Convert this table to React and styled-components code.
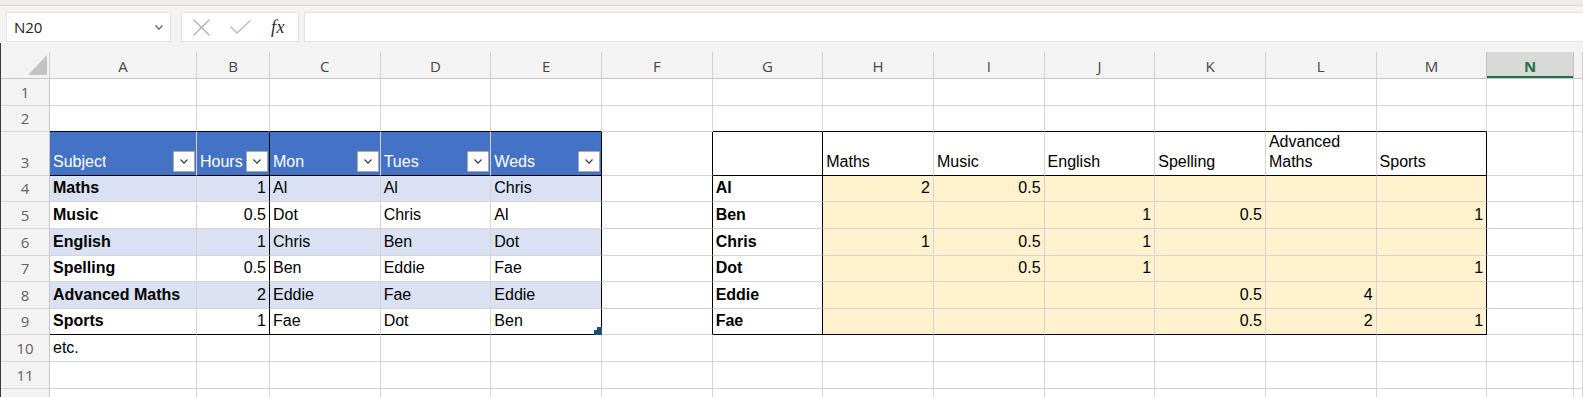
import React from 'react';
import styled, { createGlobalStyle, css } from 'styled-components';

const GRID = '#d4d4d4';
const HEAD_LINE = '#c6c6c6';
const UI_FONT = '"Open Sans", "Noto Sans", "DejaVu Sans", sans-serif';
const CELL_FONT = '"Liberation Sans", Arial, sans-serif';

const GlobalStyle = createGlobalStyle`
  html, body { margin: 0; padding: 0; background: #fff; overflow: hidden; }
  body { font-family: ${CELL_FONT}; }
  * { box-sizing: border-box; }
`;

const Window = styled.div`
  width: 1583px;
  height: 397px;
  overflow: hidden;
  background: #f3f3f3;
  display: flex;
  flex-direction: column;
`;

const TopStrip = styled.div`
  height: 6px;
  flex-shrink: 0;
  background: #eeedeb;
  border-bottom: 1px solid #d9d8d6;
`;

const FormulaBar = styled.div`
  height: 37px;
  flex-shrink: 0;
  display: flex;
  align-items: flex-start;
  padding: 6px 0 0 6px;
`;

const Box = styled.div`
  height: 30px;
  background: #fff;
  border: 1px solid #e3e3e3;
  display: flex;
  align-items: center;
`;

const NameBox = styled(Box)`
  width: 165px;
  justify-content: space-between;
  padding: 0 7px 0 7px;
  font-family: ${UI_FONT};
  font-size: 15px;
  color: #222;
`;

const FxBox = styled(Box)`
  width: 118px;
  margin-left: 10px;
  padding-left: 11px;
`;

const FormulaInput = styled(Box)`
  flex: 1;
  margin-left: 5px;
  border-right: none;
`;

const Fx = styled.span`
  font-family: "Liberation Serif", "DejaVu Serif", serif;
  font-style: italic;
  font-size: 18px;
  color: #2b2b2b;
  margin-left: 20px;
  letter-spacing: 0.5px;
`;

const Sheet = styled.div`
  flex: 1;
  display: grid;
  grid-template-columns: 49px 147px 73px repeat(11, 110.67px) 86.67px minmax(0, 1fr);
  grid-template-rows: 36px 26.6px 26.6px 43.6px repeat(9, 26.6px);
  background: #fff;
  border-left: 1px solid #3a3a3a;
`;

const ColHeaderCell = styled.div`
  background: #f3f3f3;
  border-bottom: 1px solid ${HEAD_LINE};
  display: flex;
  align-items: flex-end;
  padding-top: 9px;
  min-width: 0;
`;

const ColLabel = styled.div`
  flex: 1;
  height: 100%;
  border-right: 1px solid #d0d0d0;
  display: flex;
  align-items: ${(p) => (p.$corner ? 'flex-end' : 'center')};
  justify-content: ${(p) => (p.$corner ? 'flex-end' : 'center')};
  padding: ${(p) => (p.$corner ? '0 2px 3px 0' : '1px 0 0 0')};
  font-family: ${UI_FONT};
  font-size: 15px;
  color: #464646;
  overflow: hidden;
  ${(p) =>
    p.$selected &&
    css`
      background: #d9d9d9;
      color: #217346;
      font-weight: 700;
      border-left: 1px solid #c0c0c0;
      border-right-color: #c0c0c0;
      box-shadow: inset 0 -2px 0 #217346;
      margin-left: -1px;
    `}
`;

const RowHeader = styled.div`
  background: #f3f3f3;
  border-right: 1px solid ${HEAD_LINE};
  border-bottom: 1px solid ${GRID};
  display: flex;
  align-items: flex-end;
  justify-content: center;
  padding-bottom: 3px;
  font-family: ${UI_FONT};
  font-size: 15px;
  line-height: 20px;
  color: #616161;
`;

const Cell = styled.div`
  position: relative;
  min-width: 0;
  display: flex;
  align-items: flex-end;
  justify-content: ${(p) => (p.$align === 'right' ? 'flex-end' : 'flex-start')};
  padding: 0 3px 3px 3px;
  font-family: ${CELL_FONT};
  font-size: 16px;
  line-height: 20px;
  white-space: ${(p) => (p.$wrap ? 'normal' : 'nowrap')};
  font-weight: ${(p) => (p.$bold ? 700 : 400)};
  color: ${(p) => p.$color || '#000'};
  background: ${(p) => p.$bg || 'transparent'};
  border-right: 1px solid ${(p) => (p.$br ? '#000' : GRID)};
  border-bottom: 1px solid ${(p) => (p.$bb ? '#000' : GRID)};
  ${(p) => p.$filter && css`padding-right: 1px;`}
`;

const CellText = styled.span`
  overflow: ${(p) => (p.$clip ? 'hidden' : 'visible')};
`;

const FilterButton = styled.div`
  flex-shrink: 0;
  margin-left: auto;
  width: 22px;
  height: 21px;
  background: #fff;
  border: 1px solid #a9a9a9;
  border-radius: 1px;
  display: flex;
  align-items: center;
  justify-content: center;
`;

const ResizeHandle = styled.svg`
  position: absolute;
  right: -1px;
  bottom: -1px;
`;

const Chevron = ({ color = '#444', w = 8, h = 5 }) => (
  <svg width={w} height={h} viewBox="0 0 8 5" fill="none">
    <polyline points="0.5,0.5 4,4.2 7.5,0.5" stroke={color} strokeWidth="1.1" />
  </svg>
);

const XIcon = () => (
  <svg width="17" height="17" viewBox="0 0 17 17" fill="none">
    <line x1="0.5" y1="0.5" x2="16.5" y2="16.5" stroke="#a9a9a9" strokeWidth="1.1" />
    <line x1="16.5" y1="0.5" x2="0.5" y2="16.5" stroke="#a9a9a9" strokeWidth="1.1" />
  </svg>
);

const CheckIcon = () => (
  <svg width="21" height="14" viewBox="0 0 21 14" fill="none" style={{ marginLeft: 20 }}>
    <polyline points="0.5,6.5 7,13 20.5,0.5" stroke="#b3b3b3" strokeWidth="1.1" />
  </svg>
);

const SelectAll = () => (
  <svg width="19" height="20" viewBox="0 0 19 20">
    <polygon points="19,0 19,20 0,20" fill="#c3c3c3" />
  </svg>
);

const COLS = ['A', 'B', 'C', 'D', 'E', 'F', 'G', 'H', 'I', 'J', 'K', 'L', 'M', 'N', 'O'];
const ROWS = [1, 2, 3, 4, 5, 6, 7, 8, 9, 10, 11, 12];

const leftHeader = ['Subject', 'Hours', 'Mon', 'Tues', 'Weds'];
const leftData = [
  ['Maths', 1, 'Al', 'Al', 'Chris'],
  ['Music', 0.5, 'Dot', 'Chris', 'Al'],
  ['English', 1, 'Chris', 'Ben', 'Dot'],
  ['Spelling', 0.5, 'Ben', 'Eddie', 'Fae'],
  ['Advanced Maths', 2, 'Eddie', 'Fae', 'Eddie'],
  ['Sports', 1, 'Fae', 'Dot', 'Ben'],
];
const subjects = ['Maths', 'Music', 'English', 'Spelling', 'Advanced Maths', 'Sports'];
const people = ['Al', 'Ben', 'Chris', 'Dot', 'Eddie', 'Fae'];
const matrix = {
  Al: { H: 2, I: 0.5 },
  Ben: { J: 1, K: 0.5, M: 1 },
  Chris: { H: 1, I: 0.5, J: 1 },
  Dot: { I: 0.5, J: 1, M: 1 },
  Eddie: { K: 0.5, L: 4 },
  Fae: { K: 0.5, L: 2, M: 1 },
};

function cellProps(r, ci) {
  const col = COLS[ci];
  const p = { text: '', align: 'left', bold: false, bg: null, color: null, br: false, bb: false, filter: false, wrap: false, handle: false };
  if (r === 2 && ci <= 4) p.bb = true;
  if (r >= 3 && r <= 9 && ci <= 4) {
    if (r === 3) {
      p.bg = '#4472c4';
      p.color = '#fff';
      p.text = leftHeader[ci];
      p.filter = true;
      p.bb = true;
    } else {
      const row = leftData[r - 4];
      if ((r - 4) % 2 === 0) p.bg = '#d9e1f2';
      p.text = String(row[ci]);
      p.bold = ci === 0;
      p.align = ci === 1 ? 'right' : 'left';
    }
    if (r === 9) p.bb = true;
    if (ci === 1 || ci === 4) p.br = true;
    if (r === 9 && ci === 4) p.handle = true;
  }
  if (r === 10 && ci === 0) p.text = 'etc.';
  if (r === 2 && ci >= 6 && ci <= 12) p.bb = true;
  if (r >= 3 && r <= 9 && ci === 5) p.br = true;
  if (r >= 3 && r <= 9 && ci >= 6 && ci <= 12) {
    if (r === 3) {
      p.text = ci >= 7 ? subjects[ci - 7] : '';
      p.bb = true;
      p.wrap = true;
    } else {
      const person = people[r - 4];
      if (ci === 6) {
        p.text = person;
        p.bold = true;
      } else {
        p.bg = '#fff2cc';
        p.align = 'right';
        const v = matrix[person][col];
        p.text = v === undefined ? '' : String(v);
      }
    }
    if (r === 9) p.bb = true;
    if (ci === 6 || ci === 12) p.br = true;
  }
  return p;
}

export default function App() {
  return (
    <>
      <GlobalStyle />
      <Window>
        <TopStrip />
        <FormulaBar>
          <NameBox>
            <span>N20</span>
            <Chevron w={8} h={5} color="#555" />
          </NameBox>
          <FxBox>
            <XIcon />
            <CheckIcon />
            <Fx>fx</Fx>
          </FxBox>
          <FormulaInput />
        </FormulaBar>
        <Sheet>
          <ColHeaderCell>
            <ColLabel $corner>
              <SelectAll />
            </ColLabel>
          </ColHeaderCell>
          {COLS.map((c) => (
            <ColHeaderCell key={c}>
              <ColLabel $selected={c === 'N'}>{c === 'O' ? '' : c}</ColLabel>
            </ColHeaderCell>
          ))}
          {ROWS.map((r) => (
            <React.Fragment key={r}>
              <RowHeader>{r}</RowHeader>
              {COLS.map((c, ci) => {
                const p = cellProps(r, ci);
                return (
                  <Cell
                    key={c}
                    $align={p.align}
                    $bold={p.bold}
                    $bg={p.bg}
                    $color={p.color}
                    $br={p.br}
                    $bb={p.bb}
                    $wrap={p.wrap}
                    $filter={p.filter}
                  >
                    <CellText $clip={p.filter}>{p.text}</CellText>
                    {p.filter && (
                      <FilterButton>
                        <Chevron color="#333" />
                      </FilterButton>
                    )}
                    {p.handle && (
                      <ResizeHandle width="8" height="8" viewBox="0 0 8 8">
                        <path d="M3 0H8V8H0V3H3Z" fill="#1f4e78" />
                      </ResizeHandle>
                    )}
                  </Cell>
                );
              })}
            </React.Fragment>
          ))}
        </Sheet>
      </Window>
    </>
  );
}
